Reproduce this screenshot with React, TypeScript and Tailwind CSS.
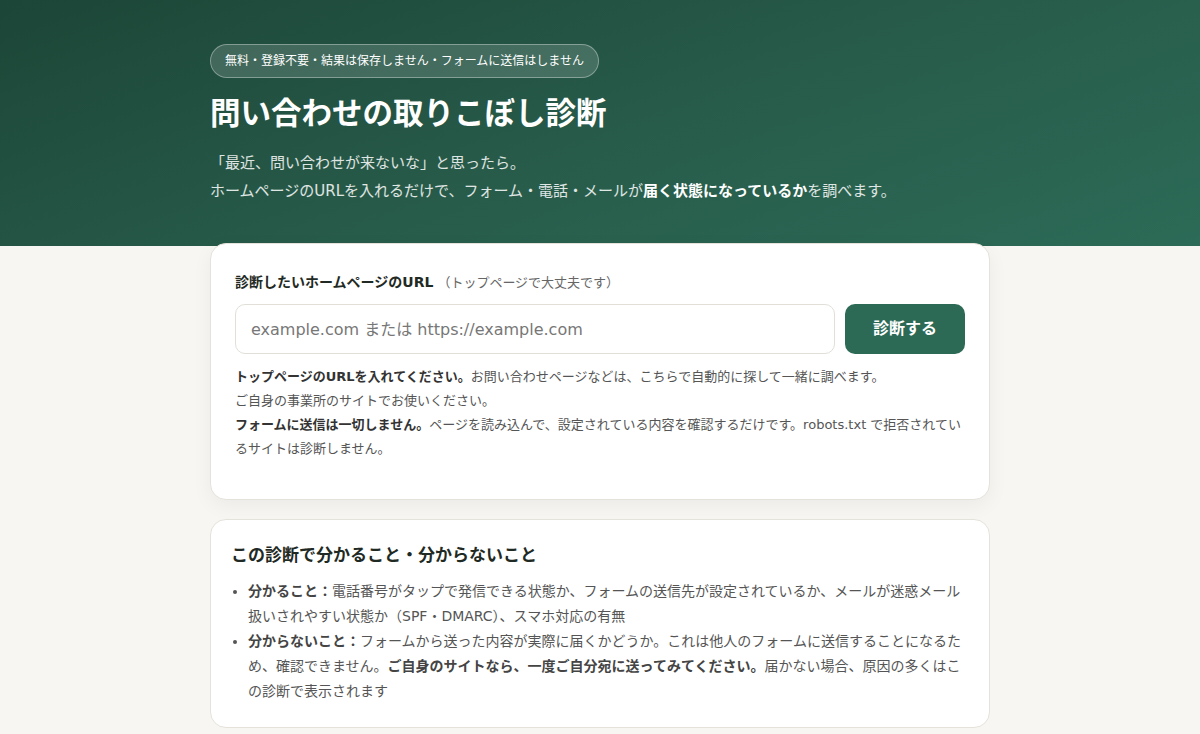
export default function App() {
  return (
    <div
      className="min-h-screen bg-[#f7f6f2] text-[#1f2a24]"
      style={{ fontFamily: '"DejaVu Sans", "Noto Sans CJK JP", sans-serif' }}
    >
      <header className="h-[246px] bg-[linear-gradient(160deg,#1c4637_0%,#275a49_50%,#2c6b57_100%)] text-white">
        <div className="mx-auto w-[780px] pt-[44px]">
          <div className="inline-flex h-[34px] items-center rounded-full border border-white/35 bg-white/15 px-[14px] text-[12px]">
            無料・登録不要・結果は保存しません・フォームに送信はしません
          </div>
          <h1 className="mt-[14px] text-[30.5px] font-bold leading-[44px]">問い合わせの取りこぼし診断</h1>
          <p className="mt-[13px] text-[15px] leading-[28px] text-white/85">
            「最近、問い合わせが来ないな」と思ったら。
            <br />
            ホームページのURLを入れるだけで、フォーム・電話・メールが
            <strong className="font-bold text-white">届く状態になっているか</strong>を調べます。
          </p>
        </div>
      </header>

      <main className="mx-auto w-[780px] pb-10">
        <section className="-mt-[3px] rounded-[16px] border border-[#e4e2da] bg-white px-[24px] pb-[38px] pt-[27px] shadow-[0_6px_20px_rgba(0,0,0,0.05)]">
          <label className="block text-[14px] font-bold leading-[22px]">
            診断したいホームページのURL
            <span className="ml-1 text-[13px] font-normal text-[#666]">（トップページで大丈夫です）</span>
          </label>
          <div className="mt-[10px] flex gap-[10px]">
            <input
              className="h-[50px] flex-1 rounded-[10px] border border-[#e1dfd8] px-[15px] text-[16px] text-[#333] outline-none placeholder:text-[#777]"
              placeholder="example.com または https://example.com"
            />
            <button className="h-[50px] w-[120px] rounded-[10px] bg-[#2d6a56] text-[16px] font-bold text-white">
              診断する
            </button>
          </div>
          <div className="mt-[11px] text-[13px] leading-[24px] text-[#555]">
            <p>
              <strong className="font-bold text-[#333]">トップページのURLを入れてください。</strong>
              お問い合わせページなどは、こちらで自動的に探して一緒に調べます。
              <br />
              ご自身の事業所のサイトでお使いください。
            </p>
            <p>
              <strong className="font-bold text-[#333]">フォームに送信は一切しません。</strong>
              ページを読み込んで、設定されている内容を確認するだけです。robots.txt で拒否されているサイトは診断しません。
            </p>
          </div>
        </section>

        <section className="mt-[19px] rounded-[16px] border border-[#e4e2da] bg-white px-[20px] pb-[23px] pt-[22px]">
          <h2 className="text-[17px] font-bold leading-[26px]">この診断で分かること・分からないこと</h2>
          <ul className="mt-[11px] list-disc pl-[17px] text-[14px] leading-[25px] text-[#555] marker:text-[#555]">
            <li>
              <strong className="font-bold text-[#444]">分かること：</strong>
              電話番号がタップで発信できる状態か、フォームの送信先が設定されているか、メールが迷惑メール扱いされやすい状態か（SPF・DMARC）、スマホ対応の有無
            </li>
            <li>
              <strong className="font-bold text-[#444]">分からないこと：</strong>
              フォームから送った内容が実際に届くかどうか。これは他人のフォームに送信することになるため、確認できません。
              <strong className="font-bold text-[#444]">ご自身のサイトなら、一度ご自分宛に送ってみてください。</strong>
              届かない場合、原因の多くはこの診断で表示されます
            </li>
          </ul>
        </section>
      </main>
    </div>
  );
}
